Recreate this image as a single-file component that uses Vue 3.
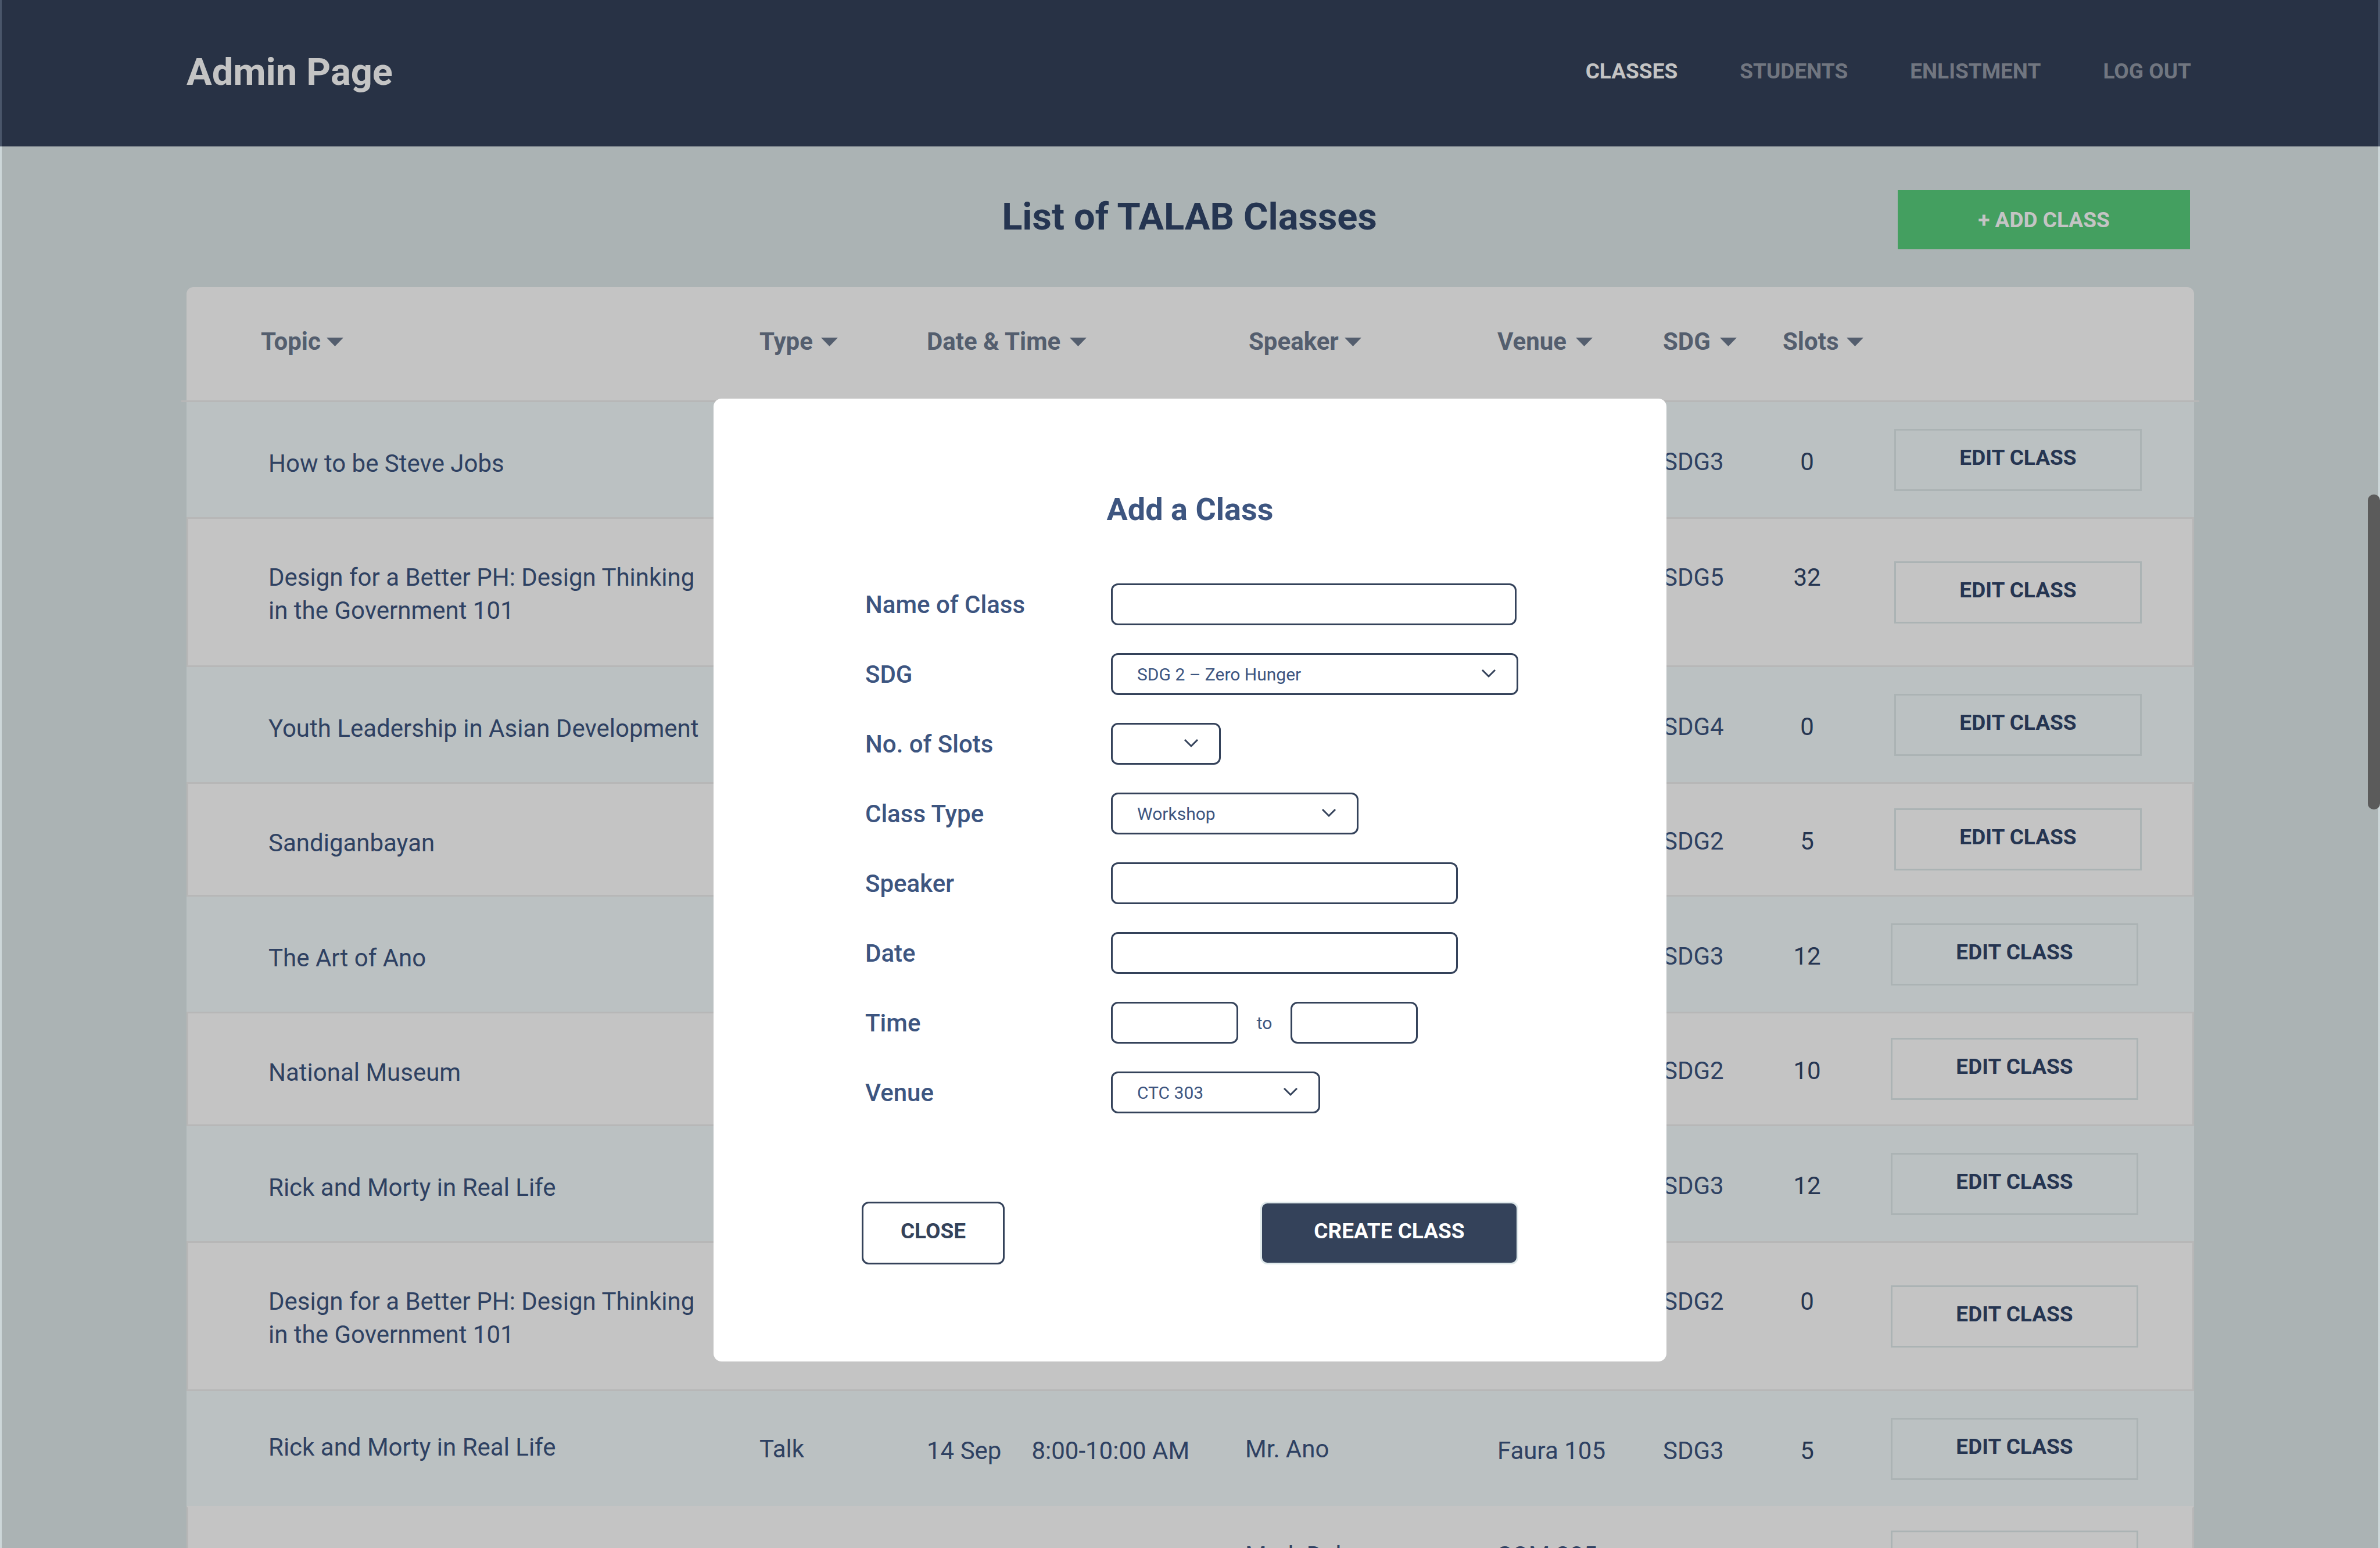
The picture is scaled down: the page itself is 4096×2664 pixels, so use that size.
<script setup>
import { ref } from 'vue'

const links = [
  { label: 'CLASSES', active: true },
  { label: 'STUDENTS' },
  { label: 'ENLISTMENT' },
  { label: 'LOG OUT' }
]

const columns = [
  { key: 'topic', label: 'Topic', gap: 'tight' },
  { key: 'type', label: 'Type' },
  { key: 'date', label: 'Date & Time', gap: 'wide' },
  { key: 'speaker', label: 'Speaker', gap: 'tight' },
  { key: 'venue', label: 'Venue', gap: 'wide' },
  { key: 'sdg', label: 'SDG', gap: 'wide' },
  { key: 'slots', label: 'Slots' }
]

const rows = [
  { topic: 'How to be Steve Jobs', sdg: 'SDG3', slots: '0' },
  { topic: 'Design for a Better PH: Design Thinking in the Government 101', sdg: 'SDG5', slots: '32', kind: 'tall' },
  { topic: 'Youth Leadership in Asian Development', sdg: 'SDG4', slots: '0' },
  { topic: 'Sandiganbayan', sdg: 'SDG2', slots: '5' },
  { topic: 'The Art of Ano', sdg: 'SDG3', slots: '12' },
  { topic: 'National Museum', sdg: 'SDG2', slots: '10' },
  { topic: 'Rick and Morty in Real Life', sdg: 'SDG3', slots: '12' },
  { topic: 'Design for a Better PH: Design Thinking in the Government 101', sdg: 'SDG2', slots: '0', kind: 'tall' },
  {
    topic: 'Rick and Morty in Real Life',
    type: 'Talk',
    day: '14 Sep',
    time: '8:00-10:00 AM',
    speaker: 'Mr. Ano',
    venue: 'Faura 105',
    sdg: 'SDG3',
    slots: '5',
    kind: 'full'
  },
  { speaker: 'Mark Dela', venue: 'SOM 305', sdg: 'SDG3', slots: '0', kind: 'raised' }
]

const form = ref({
  name: '',
  sdg: 'SDG 2 – Zero Hunger',
  slots: '',
  type: 'Workshop',
  speaker: '',
  date: '',
  from: '',
  to: '',
  venue: 'CTC 303'
})
</script>

<template>
  <div class="page">
    <header class="topbar">
      <h1 class="brand">Admin Page</h1>
      <nav class="nav">
        <a v-for="l in links" :key="l.label" href="#" :class="{ active: l.active }">{{ l.label }}</a>
      </nav>
    </header>

    <main class="content">
      <div class="toolbar">
        <h2 class="heading">List of TALAB Classes</h2>
        <button type="button" class="add">+ ADD CLASS</button>
      </div>

      <table class="classes">
        <colgroup>
          <col />
          <col class="w-type" />
          <col class="w-date" />
          <col class="w-speaker" />
          <col class="w-venue" />
          <col class="w-sdg" />
          <col class="w-slots" />
          <col class="w-action" />
        </colgroup>
        <thead>
          <tr>
            <th v-for="c in columns" :key="c.key" scope="col" :class="c.key">
              <button type="button" class="sort" :class="c.gap">
                {{ c.label }}
                <svg width="29" height="15" viewBox="0 0 29 15" aria-hidden="true"><path d="M0 0H29L14.5 15Z" fill="currentColor" /></svg>
              </button>
            </th>
            <td></td>
          </tr>
        </thead>
        <tbody>
          <tr v-for="(r, i) in rows" :key="i" :class="r.kind">
            <td class="topic">{{ r.topic }}</td>
            <td class="type">{{ r.type }}</td>
            <td class="date"><div v-if="r.day" class="when"><span>{{ r.day }}</span><span>{{ r.time }}</span></div></td>
            <td class="speaker">{{ r.speaker }}</td>
            <td class="venue">{{ r.venue }}</td>
            <td class="sdg">{{ r.sdg }}</td>
            <td class="slots">{{ r.slots }}</td>
            <td class="action"><button type="button" class="edit">EDIT CLASS</button></td>
          </tr>
        </tbody>
      </table>
    </main>

    <div class="overlay">
      <form class="modal" role="dialog" aria-labelledby="modal-title" @submit.prevent>
        <h2 id="modal-title" class="modal-title">Add a Class</h2>

        <div class="fields">
          <label for="f-name">Name of Class</label>
          <input id="f-name" v-model="form.name" type="text" class="w-name" />

          <label for="f-sdg">SDG</label>
          <div class="select w-full">
            <select id="f-sdg" v-model="form.sdg"><option>SDG 2 – Zero Hunger</option></select>
            <svg class="chevron" width="26" height="16" viewBox="0 0 26 16" aria-hidden="true"><path d="M2 2L13 13L24 2" /></svg>
          </div>

          <label for="f-slots">No. of Slots</label>
          <div class="select w-count">
            <select id="f-slots" v-model="form.slots"><option></option></select>
            <svg class="chevron" width="26" height="16" viewBox="0 0 26 16" aria-hidden="true"><path d="M2 2L13 13L24 2" /></svg>
          </div>

          <label for="f-type">Class Type</label>
          <div class="select w-kind">
            <select id="f-type" v-model="form.type"><option>Workshop</option></select>
            <svg class="chevron" width="26" height="16" viewBox="0 0 26 16" aria-hidden="true"><path d="M2 2L13 13L24 2" /></svg>
          </div>

          <label for="f-speaker">Speaker</label>
          <input id="f-speaker" v-model="form.speaker" type="text" class="w-medium" />

          <label for="f-date">Date</label>
          <input id="f-date" v-model="form.date" type="text" class="w-medium" />

          <label for="f-from">Time</label>
          <div class="range">
            <input id="f-from" v-model="form.from" type="text" class="w-time" />
            <label for="f-to" class="to">to</label>
            <input id="f-to" v-model="form.to" type="text" class="w-time" />
          </div>

          <label for="f-venue">Venue</label>
          <div class="select w-room">
            <select id="f-venue" v-model="form.venue"><option>CTC 303</option></select>
            <svg class="chevron" width="26" height="16" viewBox="0 0 26 16" aria-hidden="true"><path d="M2 2L13 13L24 2" /></svg>
          </div>
        </div>

        <div class="actions">
          <button type="button" class="close">CLOSE</button>
          <button type="submit" class="create">CREATE CLASS</button>
        </div>
      </form>
    </div>

    <div class="thumb"></div>
  </div>
</template>

<style>
body {
  margin: 0;
}
</style>

<style scoped>
* {
  box-sizing: border-box;
}

.page {
  position: relative;
  height: 100vh;
  overflow: hidden;
  background: #dfe9eb;
  box-shadow: inset 3px 0 #cdd7d9, inset -3px 0 #cdd7d9;
  color: #3d5580;
  font-family: Roboto, "Liberation Sans", sans-serif;
  font-size: 42px;
}

button,
input,
select {
  font-family: inherit;
  margin: 0;
  padding: 0;
}

h1,
h2 {
  margin: 0;
}

/* top bar */
.topbar {
  display: flex;
  align-items: center;
  justify-content: space-between;
  height: 252px;
  padding: 0 325px 4px 321px;
  background: #34425a;
  box-shadow: inset 3px 0 #4a566a, inset -3px 0 #4a566a;
}

.brand {
  color: #fff;
  font-size: 65px;
  font-weight: 700;
}

.nav {
  display: flex;
  gap: 107px;
  padding-bottom: 4px;
}

.nav a {
  color: rgba(255, 255, 255, 0.48);
  font-size: 37px;
  font-weight: 700;
  text-decoration: none;
}

.nav a.active {
  color: #fff;
}

/* list */
.content {
  margin: 0 320px 0 321px;
}

.toolbar {
  display: grid;
  grid-template-columns: 1fr auto 1fr;
  align-items: start;
  height: 242px;
  padding: 75px 7px 0 0;
}

.heading {
  grid-column: 2;
  margin-left: 4px;
  color: #31456a;
  font-size: 65px;
  font-weight: 700;
  line-height: 92px;
}

.add {
  justify-self: end;
  width: 503px;
  height: 102px;
  border: 0;
  background: #59cf7e;
  color: #fff;
  font-size: 37px;
  font-weight: 700;
}

.classes {
  width: 100%;
  border-spacing: 0;
  table-layout: fixed;
  background: #fff;
  border-radius: 12px;
}

.w-type { width: 285px; }
.w-date { width: 549px; }
.w-speaker { width: 436px; }
.w-venue { width: 285px; }
.w-sdg { width: 206px; }
.w-slots { width: 186px; }
.w-action { width: 522px; }

td,
th {
  padding: 0;
  text-align: left;
  vertical-align: middle;
}

thead tr {
  position: relative;
}

thead th,
thead td {
  height: 198px;
  padding-bottom: 10px;
}

thead td:last-child::after {
  content: "";
  position: absolute;
  right: -9px;
  bottom: 0;
  left: -9px;
  height: 3px;
  background: #efefef;
}

th.topic { padding-left: 128px; }
th.speaker { padding-left: 8px; }

.sort {
  display: flex;
  align-items: center;
  gap: 14px;
  border: 0;
  background: none;
  color: #6e7b8f;
  font-size: 42px;
  font-weight: 700;
  line-height: 48px;
  white-space: nowrap;
}

.sort.tight { gap: 10px; }
.sort.wide { gap: 16px; }

tbody td {
  height: 198px;
  padding-top: 6px;
  line-height: 57px;
}

tbody tr:nth-child(odd) {
  background: #f4fbfd;
}

tbody tr:nth-child(even) td {
  height: 197px;
  border-top: 3px solid #efefef;
  border-bottom: 3px solid #efefef;
}

tbody tr:nth-child(even) td:first-child { border-left: 3px solid #efefef; }
tbody tr:nth-child(even) td:last-child { border-right: 3px solid #efefef; }
tbody tr:nth-child(even) td.topic { padding-left: 138px; }
tbody tr.tall:nth-child(even) td { height: 258px; }
tbody tr.raised:nth-child(even) td {
  height: 191px;
  border-top-color: #fff;
}

td.topic {
  padding: 12px 80px 0 141px;
}

td.type,
td.speaker {
  padding-top: 0;
}

th.date,
td.date {
  padding-left: 3px;
}

td.speaker {
  padding-left: 2px;
}

td.slots {
  padding-right: 102px;
  color: #31456a;
  text-align: center;
}

tbody td.action {
  padding: 0;
}

tbody tr:nth-child(-n + 4) td.action {
  padding-left: 6px;
}

.tall td.topic { padding-top: 5px; }
.tall td.sdg,
.tall td.slots { padding-bottom: 57px; }
.full td.topic { padding-top: 0; padding-bottom: 6px; }
.raised td { padding-bottom: 22px; }
.raised td.venue { padding-top: 0; }

.when {
  display: flex;
  gap: 52px;
}

.edit {
  display: block;
  width: 426px;
  height: 107px;
  padding-bottom: 8px;
  border: 3px solid #dfe9eb;
  background: none;
  color: #31456a;
  font-size: 37px;
  font-weight: 700;
}

/* dialog */
.overlay {
  position: absolute;
  inset: 0 3px;
  display: flex;
  align-items: flex-start;
  justify-content: center;
  padding-top: 686px;
  background: rgba(0, 0, 0, 0.23);
}

.modal {
  width: 1640px;
  padding: 159px 255px 167px;
  border-radius: 14px;
  background: #fff;
}

.modal-title {
  margin-bottom: 95px;
  font-size: 54px;
  font-weight: 700;
  line-height: 64px;
  text-align: center;
}

.fields {
  display: grid;
  grid-template-columns: 429px 1fr;
  grid-auto-rows: 72px;
  row-gap: 48px;
  align-items: center;
}

.fields label {
  padding-left: 6px;
  font-weight: 500;
}

.fields input,
.fields select {
  height: 72px;
  border: 3px solid #34425a;
  border-radius: 12px;
  background: #fff;
  color: #3d5580;
  font-size: 30px;
}

.fields input {
  padding: 0 42px;
}

.fields select {
  width: 100%;
  padding: 0 42px;
  appearance: none;
}

.select {
  position: relative;
}

.chevron {
  position: absolute;
  top: 27px;
  right: 38px;
  fill: none;
  stroke: #34425a;
  stroke-width: 3px;
  pointer-events: none;
}

.w-name { width: 698px; }
.w-full { width: 701px; }
.w-count { width: 189px; }
.w-kind { width: 426px; }
.w-medium { width: 597px; }
.w-time { width: 219px; }
.w-room { width: 360px; }

.range {
  display: flex;
  align-items: center;
}

.range .to {
  width: 90px;
  padding: 0;
  font-size: 30px;
  font-weight: 400;
  text-align: center;
}

.actions {
  display: flex;
  justify-content: space-between;
  margin-top: 152px;
}

.close,
.create {
  height: 108px;
  padding-bottom: 7px;
  border: 3px solid #34425a;
  border-radius: 12px;
  background: #fff;
  color: #34425a;
  font-size: 37px;
  font-weight: 700;
}

.close {
  width: 246px;
}

.create {
  width: 444px;
  border-color: #dfe9eb;
  background: #34425a;
  color: #fff;
}

/* page scroll position */
.thumb {
  position: absolute;
  top: 851px;
  right: 0;
  width: 21px;
  height: 542px;
  border-radius: 10px;
  background: #5b5b5b;
}
</style>
